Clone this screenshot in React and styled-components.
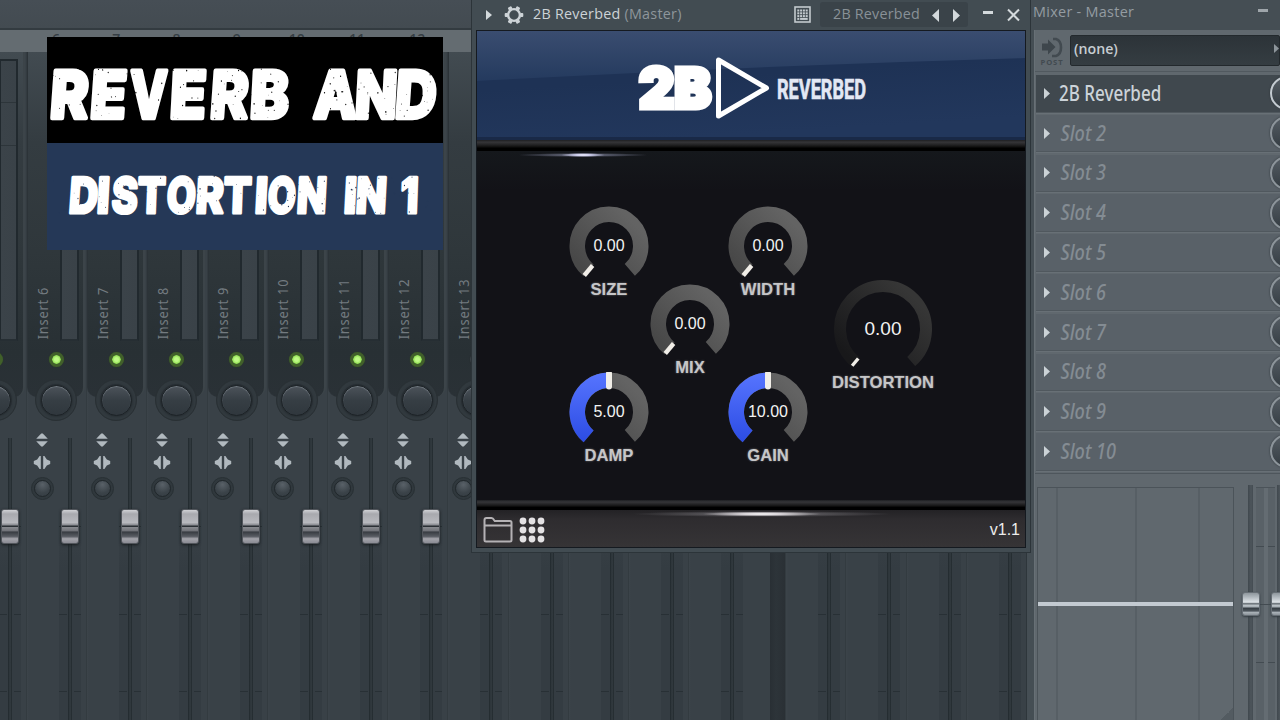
import React from 'react';
import styled, { createGlobalStyle } from 'styled-components';

const GlobalStyle = createGlobalStyle`
  * { box-sizing: border-box; }
  body { margin: 0; background: #394147; overflow: hidden; }
`;

const uiFont = `'Open Sans', 'Noto Sans', sans-serif`;
const narrowFont = `'Noto Sans', 'Open Sans', sans-serif`;

const Desktop = styled.div`
  position: relative;
  display: flex;
  width: 1280px;
  height: 720px;
  overflow: hidden;
  font-family: ${uiFont};
  background: #394147;
`;

/* ---------- mixer strips ---------- */

const Mixer = styled.div`
  display: flex;
  flex-direction: column;
  width: 1026px;
  flex: none;
  overflow: hidden;
`;

const TopBar = styled.div`
  height: 30px;
  flex: none;
  background: linear-gradient(#464e55, #434b51);
  border-bottom: 2px solid #333b40;
`;

const Ruler = styled.div`
  display: flex;
  height: 22px;
  flex: none;
  padding-left: 26px;
  background: #646c71;
`;

const RulerMark = styled.div`
  width: 60.2px;
  flex: none;
  text-align: center;
  font-size: 14px;
  line-height: 17px;
  font-weight: 600;
  color: #353d43;
`;

const Strips = styled.div`
  display: flex;
  flex: 1;
  margin-left: -34.2px;
`;

const StripBox = styled.div`
  display: flex;
  flex-direction: column;
  align-items: center;
  width: 60.2px;
  height: 668px;
  flex: none;
  background: linear-gradient(90deg, #333b40 0, #333b40 1px, #3c444a 1px, #394147 3px, #394147 100%);
`;

const Upper = styled.div`
  display: flex;
  flex-direction: column;
  align-items: center;
  width: 58px;
  height: 345px;
  flex: none;
  padding-top: 7px;
  border-radius: 0 0 10px 10px;
  border-left: 1px solid #2c3338;
  border-right: 2px solid #3c4449;
  background: linear-gradient(#424b51 0, #343c41 90px, #2f373b 200px, #283034 300px, #2a3136);
`;

const NameAndMeter = styled.div`
  display: flex;
  align-items: flex-end;
  width: 58px;
  height: 282px;
  padding-left: 7px;
`;

const StripName = styled.div`
  width: 18px;
  height: 60px;
  margin-right: 8px;
  writing-mode: vertical-rl;
  transform: rotate(180deg) scaleY(0.91);
  transform-origin: 50% 50%;
  font-family: ${narrowFont};
  font-size: 14px;
  line-height: 18px;
  letter-spacing: 0.9px;
  white-space: nowrap;
  color: #737b80;
  position: relative;
  top: 1px;
`;

const Meter = styled.div`
  width: 19px;
  height: 282px;
  border: 2px solid #21292e;
  border-bottom-color: #262e33;
  background:
    linear-gradient(#2d353a, #2d353a) 0 41px / 100% 1px no-repeat,
    linear-gradient(#2d353a, #2d353a) 0 84px / 100% 1px no-repeat,
    linear-gradient(90deg, #3b4349, #3a4248);
`;

const Led = styled.div`
  width: 15px;
  height: 15px;
  margin-top: 11px;
  margin-left: 1px;
  border-radius: 50%;
  border: 3px solid ${(p) => (p.$off ? '#394147' : '#41602a')};
  background: ${(p) => (p.$off ? '#565e63' : 'radial-gradient(#bdf884 0 30%, #8bdb4c 70%)')};
  background-clip: padding-box;
  box-shadow: 0 0 1px ${(p) => (p.$off ? '#222' : '#33501f')};
`;

const PanSocket = styled.div`
  display: grid;
  place-items: center;
  width: 42px;
  height: 42px;
  flex: none;
  margin-top: -18px;
  border-radius: 50%;
  background: #2c3338;
  border: 1px solid #293034;
  box-shadow: inset 0 0 0 4px #31393e;
`;

const PanKnob = styled.div`
  width: 31px;
  height: 31px;
  border-radius: 50%;
  border: 1px solid #1d2327;
  background: linear-gradient(#4c535a, #363e44 50%, #30373d);
  box-shadow: inset 0 1px 1px #737b82, 0 0 2px #1b2024;
`;

const Lower = styled.div`
  display: flex;
  flex: 1;
  width: 100%;
`;

const Buttons = styled.div`
  display: flex;
  flex-direction: column;
  align-items: center;
  width: 32px;
  margin-right: 1px;
  padding-top: 12px;
  gap: 8px;
`;

const SmallKnobSocket = styled.div`
  display: grid;
  place-items: center;
  width: 23px;
  height: 23px;
  margin-top: -1px;
  border-radius: 50%;
  border: 1px solid #283034;
  background: #30383d;
`;

const SmallKnob = styled.div`
  width: 17px;
  height: 17px;
  border-radius: 50%;
  border: 1px solid #20272b;
  background: radial-gradient(circle at 50% 25%, #596168, #3b4349 60%, #343c42);
`;

const TrackArea = styled.div`
  display: flex;
  flex-direction: column;
  align-items: center;
  width: 22px;
  margin-top: 17px;
  background:
    linear-gradient(#283035, #283035) 0 176px / 8px 1px no-repeat,
    linear-gradient(#283035, #283035) 15px 176px / 7px 1px no-repeat,
    linear-gradient(#283035, #283035) 0 253px / 8px 1px no-repeat,
    linear-gradient(#283035, #283035) 15px 253px / 7px 1px no-repeat,
    linear-gradient(90deg, #20282c, #2f373c 40%, #30383d 65%, #20282c) 9px 0 / 4px 100% no-repeat,
    linear-gradient(#283035, #283035) 0 88px / 100% 1px no-repeat,
    linear-gradient(#394147 80px, #343c42 130px);
`;

const Handle = styled.div`
  width: ${(p) => p.$w || 18}px;
  height: ${(p) => p.$h || 35}px;
  flex: none;
  border-radius: 3px;
  border: 1px solid #52565c;
  background: linear-gradient(
    #d0d1d5 0,
    #a8a9ae 12%,
    #b8b9be 38%,
    #85878d 46%,
    #2b3035 48%,
    #2b3035 51%,
    #85878c 53%,
    #74767c 62%,
    #393d43 67%,
    #595c63 80%,
    #a3a3aa 87%,
    #8b8c94
  );
  box-shadow: 0 1px 3px #181d20;
`;

const StripHandle = styled(Handle)`
  margin-top: 71px;
`;

const SideHandle = styled(Handle)`
  border-color: #666e75;
  background: linear-gradient(
    #8f979d 0,
    #a9b1b7 15%,
    #dfe4e8 42%,
    #8f969c 46%,
    #4c545a 50%,
    #c0c7cc 54%,
    #a3abb1 64%,
    #343b41 68%,
    #50585f 82%,
    #a9b1b7 88%,
    #8b9299
  );
  box-shadow: 0 1px 2px #343c42;
`;

const Divider = styled.div`
  width: 37px;
  flex: none;
  background: linear-gradient(90deg, #394147 22px, #292f34 22px, #2d3439 28px, #2a3035 37px);
`;

const ArrowsUpDown = () => (
  <svg width="14" height="14" viewBox="0 0 14 14" fill="#b1b9bf">
    <path d="M6.200 .5h1.600L12.800 5.800H1.200z" />
    <path d="M1.200 8.200h11.600L7.800 13.500H6.200z" />
  </svg>
);

const ArrowsLeftRight = () => (
  <svg width="18" height="15" viewBox="0 0 18 15" fill="#b1b9bf">
    <path d="M7.800 1v13H6.600L4.200 10.500 .8 9V6l3.400-1.500L6.600 1z" />
    <path d="M10.200 1v13h1.200l2.400-3.500L17.200 9V6l-3.400-1.500L11.400 1z" />
  </svg>
);

const Strip = ({ name, off }) => (
  <StripBox>
    <Upper>
      <NameAndMeter>
        <StripName>{name}</StripName>
        <Meter />
      </NameAndMeter>
      <Led $off={off} />
    </Upper>
    <PanSocket>
      <PanKnob />
    </PanSocket>
    <Lower>
      <Buttons>
        <ArrowsUpDown />
        <ArrowsLeftRight />
        <SmallKnobSocket>
          <SmallKnob />
        </SmallKnobSocket>
      </Buttons>
      <TrackArea>
        <StripHandle />
      </TrackArea>
    </Lower>
  </StripBox>
);

/* ---------- banner ---------- */

const Banner = styled.div`
  position: absolute;
  left: 47px;
  top: 37px;
  width: 396px;
  height: 213px;
  background: #253857;
`;

const BannerLine = styled.svg`
  display: block;
  width: 396px;
  height: 106px;
  overflow: visible;
  background: ${(p) => p.$bg};
  fill: #fff;
  stroke: #fff;
  stroke-linejoin: round;
  font-family: Inter, 'Open Sans', sans-serif;
  font-weight: 800;
`;

const makeSpecks = (count, seed, top, height) => {
  let s = seed;
  const next = () => {
    s = (s * 16807) % 2147483647;
    return s / 2147483647;
  };
  return Array.from({ length: count }, () => ({
    x: next() * 380 + 6,
    y: top + next() * height,
    r: 0.25 + next() * 0.4,
  }));
};

const Specks = ({ items, color }) =>
  items.map((d, i) => (
    <ellipse key={i} cx={d.x} cy={d.y} rx={d.r} ry={d.r * 1.3} fill={color} stroke="none" />
  ));

const bigSpecks = makeSpecks(150, 77, 32, 50);
const smallSpecks = makeSpecks(110, 191, 33, 38);

/* each letter sits on its own slant, like brush lettering */
const Lettering = ({ letters, size, y, stroke }) =>
  letters.map(([ch, x, w, skew], i) => (
    <text
      key={i}
      transform={`translate(${x} ${y}) skewX(${skew})`}
      fontSize={size}
      strokeWidth={stroke}
      textLength={w}
      lengthAdjust="spacingAndGlyphs"
    >
      {ch}
    </text>
  ));

const topLetters = [
  ['R', 2, 38, -4],
  ['E', 42, 36, -4],
  ['V', 83, 37, -1],
  ['E', 122, 36, -3],
  ['R', 162, 38, -4],
  ['B', 202, 39, -3],
  ['A', 266, 43, -3],
  ['N', 307, 42, -3],
  ['D', 347, 41, -4],
];

const bottomLetters = [
  ['D', 21, 29, -4],
  ['I', 49, 13, -3],
  ['S', 64, 26, -3],
  ['T', 90, 28, -2],
  ['O', 119, 29, -3],
  ['R', 148, 28, -3],
  ['T', 176, 28, -2],
  ['I', 207, 13, -3],
  ['O', 220, 28, -3],
  ['N', 249, 30, -3],
  ['I', 296, 13, -3],
  ['N', 308, 31, -3],
  ['1', 353, 18, -2],
];

/* ---------- plugin window ---------- */

const Window = styled.div`
  position: absolute;
  left: 471px;
  top: 0;
  width: 560px;
  height: 553px;
  padding: 0 4px 5px;
  background: #424c52;
  border: 1px solid #2c3439;
  border-top: 0;
`;

const TitleBar = styled.div`
  display: flex;
  align-items: center;
  height: 30px;
  padding: 0 0 1px 10px;
  color: #cdd3d7;
  font-size: 14.3px;
`;

const TitleText = styled.div`
  width: 261px;
  margin-left: 9px;
  white-space: nowrap;
  line-height: 26px;
  letter-spacing: 0.27px;
  padding-bottom: 2px;
`;

const Dim = styled.span`
  color: #8e969b;
`;

const PresetBox = styled.div`
  display: flex;
  align-items: center;
  width: 148px;
  height: 25px;
  margin-left: 9px;
  padding-left: 13px;
  border-radius: 3px;
  background: #3a4349;
  color: #899197;
  line-height: 22px;
  letter-spacing: 0.22px;
  white-space: nowrap;
`;

const PresetName = styled.div`
  width: 99px;
  padding-bottom: 2px;
`;

const Screen = styled.div`
  display: flex;
  flex-direction: column;
  width: 550px;
  height: 518px;
  border: 1px solid #151a20;
  background: #121217;
`;

const Header = styled.div`
  height: 109px;
  flex: none;
`;

const HeaderArt = styled.svg`
  display: block;
`;

const Ridge = styled.div`
  height: ${(p) => p.$h}px;
  flex: none;
  background: linear-gradient(#1e1f22, #353538 20%, #252527 40%, #181818 55%, #000 75%, #000);
`;

const Body = styled.div`
  flex: 1;
  background:
    radial-gradient(ellipse 22px 2px at 106px 4px, #fff, #cfd0ef 35%, transparent),
    radial-gradient(ellipse 66px 2px at 106px 4px, #80849c, transparent),
    linear-gradient(#15181c, #121217 40px);
`;

const Knobs = styled.div`
  display: grid;
  grid-template-columns: 80px 82px 74px 156px;
  padding: 54.5px 0 0 92px;
`;

const KnobColumn = styled.div`
  display: flex;
  flex-direction: column;
  align-items: center;
  gap: 72px;
  padding-top: ${(p) => p.$drop || 0}px;
`;

const KnobBox = styled.div`
  display: flex;
  flex-direction: column;
  align-items: center;
  width: ${(p) => p.$size}px;
`;

const Dial = styled.div`
  display: grid;
  place-items: center;
  width: ${(p) => p.$size}px;
  height: ${(p) => p.$size}px;

  > * {
    grid-area: 1 / 1;
  }
`;

const DialValue = styled.span`
  font-family: 'Liberation Sans', Arial, sans-serif;
  font-size: ${(p) => p.$font}px;
  color: #f2f2f2;
`;

const KnobLabel = styled.div`
  margin-top: -6px;
  font-family: 'Liberation Sans', Arial, sans-serif;
  font-weight: 700;
  font-size: 16.6px;
  line-height: 20px;
  color: #c6c6c8;
  white-space: nowrap;
  text-shadow: 0 0 2px #77777a;
`;

const polar = (c, r, deg) => {
  const a = ((deg - 90) * Math.PI) / 180;
  return `${c + r * Math.cos(a)} ${c + r * Math.sin(a)}`;
};

const arc = (c, r, from, to) =>
  `M${polar(c, r, from)} A${r} ${r} 0 ${to - from > 180 ? 1 : 0} 1 ${polar(c, r, to)}`;

const Knob = ({ label, value, angle = -140, big }) => {
  const size = big ? 100 : 80;
  const c = size / 2;
  const thick = big ? 12 : 15.5;
  const r = (big ? 49 : 39.5) - thick / 2;
  const id = `ring-${label}`;
  return (
    <KnobBox $size={size}>
      <Dial $size={size}>
        <svg width={size} height={size} fill="none" strokeWidth={thick}>
          <defs>
            <linearGradient id={id} gradientUnits="userSpaceOnUse" x1="8" y1={size * 0.7} x2={size * 0.7} y2="8">
              <stop offset="0" stopColor={big ? '#18181a' : '#484848'} />
              <stop offset="1" stopColor={big ? '#363636' : '#636363'} />
            </linearGradient>
            <linearGradient id={`${id}-blue`} gradientUnits="userSpaceOnUse" x1="0" y1="0" x2="0" y2={size}>
              <stop offset="0" stopColor="#5775ff" />
              <stop offset="1" stopColor="#2646df" />
            </linearGradient>
          </defs>
          <path d={arc(c, r, -140, 139)} stroke={`url(#${id})`} />
          {angle > -140 && <path d={arc(c, r, -140, angle)} stroke={`url(#${id}-blue)`} />}
          <path
            d={`M${polar(c, r - thick / 2 + 1.5, angle)} L${polar(c, r + thick / 2 - 1, angle)}`}
            stroke="#f1eee8"
            strokeWidth={angle === -140 ? (big ? 3.4 : 4.4) : 6}
            strokeLinecap={angle === -140 ? 'butt' : 'round'}
          />
        </svg>
        <DialValue $font={big ? 19 : 16}>{value}</DialValue>
      </Dial>
      <KnobLabel>{label}</KnobLabel>
    </KnobBox>
  );
};

const Footer = styled.div`
  display: flex;
  align-items: center;
  height: 37px;
  flex: none;
  padding: 2px 5px 0 6px;
  gap: 6px;
  background:
    radial-gradient(ellipse 60px 2.5px at 285px 4px, #fff, #d8d4d8 35%, transparent),
    radial-gradient(ellipse 130px 3px at 285px 4px, #77757a, transparent),
    linear-gradient(#232225, #2e2c2f 25%, #363436);
`;

const Version = styled.div`
  margin-left: auto;
  padding-top: 1px;
  font-family: 'Liberation Sans', Arial, sans-serif;
  font-size: 16px;
  color: #ececec;
`;

const Gear = styled.svg`
  margin-left: 12px;
`;

const GearIcon = () => (
  <Gear width="20" height="20" viewBox="-10 -10 20 20">
    <circle r="5.9" fill="none" stroke="#cdd3d7" strokeWidth="2.4" />
    {[0, 60, 120, 180, 240, 300].map((a) => (
      <rect key={a} x="6" y="-2" width="3.300" height="4" rx="1" fill="#cdd3d7" transform={`rotate(${a})`} />
    ))}
  </Gear>
);

const KeypadIcon = () => (
  <svg width="17" height="17" viewBox="0 0 17 17">
    <rect x="1" y="1" width="15" height="15" fill="none" stroke="#c3cace" strokeWidth="1.6" />
    <g fill="#c3cace">
      {[3.3, 6.1, 8.9, 11.7].map((x) => [3.5, 6.3, 9.1].map((y) => <rect key={`${x}-${y}`} x={x} y={y} width="2" height="2" />))}
      <rect x="3.3" y="11.9" width="2" height="2" />
      <rect x="6.1" y="11.9" width="7.6" height="2" />
    </g>
  </svg>
);

const Triangle = ({ w = 6, h = 12, left, color = '#d3d9dc' }) => (
  <svg width={w} height={h} viewBox="0 0 6 12" preserveAspectRatio="none" fill={color}>
    <path d={left ? 'M6 0v12L0 6z' : 'M0 0v12l6-6z'} />
  </svg>
);

const PresetArrows = styled.div`
  display: flex;
  gap: 14px;
  padding-top: 2px;
`;

const WindowButtons = styled.svg`
  margin-left: 13px;
`;

/* ---------- right panel ---------- */

const SidePanel = styled.div`
  display: flex;
  flex-direction: column;
  width: 254px;
  flex: none;
  padding-left: 7px;
  background: #454e54;
  border-left: 1px solid #2e363b;
`;

const SideTitle = styled.div`
  display: flex;
  justify-content: space-between;
  height: 30px;
  flex: none;
  margin-left: -1px;
  padding: 2px 12px 0 0;
  color: #949ca2;
  font-size: 14.4px;
  line-height: 19px;
  letter-spacing: 0.3px;
`;

const Minus = styled.div`
  width: 10px;
  height: 3px;
  margin-top: 7px;
  background: #9fa6ab;
`;

const SideBody = styled.div`
  display: flex;
  flex-direction: column;
  flex: 1;
  overflow: hidden;
  background: #60686e;
  border-left: 1px solid #687076;
`;

const RouteRow = styled.div`
  display: flex;
  height: 42px;
  flex: none;
  padding: 5px 0 0 5px;
  border-bottom: 1px solid #51595f;
`;

const PostBox = styled.div`
  display: flex;
  flex-direction: column;
  align-items: center;
  width: 24px;
  margin-right: 6px;
  padding-top: 2px;
  font-size: 7.6px;
  line-height: 8px;
  font-weight: 700;
  letter-spacing: 0.9px;
  color: #424a50;
`;

const RouteSelect = styled.div`
  display: flex;
  align-items: center;
  justify-content: space-between;
  width: 210px;
  height: 31px;
  padding: 0 0 4px 3px;
  border: 1px solid #23292d;
  border-radius: 2px;
  background: linear-gradient(#2c3338, #353d42);
  color: #c6cdd2;
  font-size: 14.2px;
  font-weight: 600;
`;

const SlotList = styled.div`
  display: flex;
  flex-direction: column;
  gap: 2.3px;
  padding: 3px 0 0 1px;
`;

const SlotRow = styled.div`
  display: flex;
  align-items: center;
  height: 37.5px;
  flex: none;
  padding-left: 8px;
  background: ${(p) => (p.$active ? '#40484e' : '#596168')};
  border-bottom: 1px solid #50585e;
  box-shadow: 0 1px 0 #687076;
`;

const SlotArrow = styled.div`
  display: flex;
  width: 6px;
  flex: none;
`;

const SlotName = styled.div`
  width: 210px;
  flex: none;
  margin-left: ${(p) => (p.$active ? 9 : 10)}px;
  margin-right: ${(p) => (p.$active ? 1 : 0)}px;
  padding-bottom: 1px;
  font-family: ${narrowFont};
  font-size: 21px;
  line-height: 34px;
  font-weight: 500;
  font-style: ${(p) => (p.$active ? 'normal' : 'italic')};
  color: ${(p) => (p.$active ? '#ccd3d9' : '#848c93')};
  transform: translateX(${(p) => (p.$active ? 0 : 0.5)}px) scaleX(${(p) => (p.$active ? 0.81 : 0.86)});
  transform-origin: 0 50%;
  white-space: nowrap;
`;

const SlotKnob = styled.div`
  width: 34px;
  height: 34px;
  flex: none;
  border-radius: 50%;
  border: 2px solid ${(p) => (p.$active ? '#c3cad0' : '#8c949a')};
  background: linear-gradient(#555d64, #343c42);
  box-shadow: 0 0 2px #2b3237;
`;

const EqArea = styled.div`
  display: flex;
  flex: 1;
  margin-top: 2px;
  padding: 13px 0 0 2px;
  border-top: 1px solid #4e565c;
`;

const EqBox = styled.div`
  display: flex;
  align-items: flex-start;
  width: 197px;
  height: 260px;
  flex: none;
  padding-top: 114px;
  border: 1px solid #4b5359;
  background:
    linear-gradient(#575f65, #575f65) 18px 0 / 2px 100% no-repeat,
    linear-gradient(#575f65, #575f65) 97px 0 / 2px 100% no-repeat,
    linear-gradient(#575f65, #575f65) 160px 0 / 2px 100% no-repeat,
    linear-gradient(135deg, transparent 50%, #535b61 50%) 182px 220px / 13px 13px no-repeat;
`;

const EqLine = styled.div`
  width: 196px;
  height: 4px;
  background: #c3cad1;
`;

const SideTrack = styled.div`
  position: relative;
  z-index: 1;
  display: flex;
  justify-content: center;
  width: 18px;
  height: 260px;
  flex: none;
  margin-left: ${(p) => p.$gap}px;
  margin-top: -2px;
  padding-top: 107px;
  background: linear-gradient(90deg, #40484e, #4d555b 60%, #444c52) 6px 0 / 5px 100% no-repeat;
`;

const SideScale = styled.div`
  width: 19px;
  height: 260px;
  flex: none;
  margin-left: -4px;
  margin-right: -4px;
  border-top: 1px solid #4b5359;
  background:
    linear-gradient(#434b51, #434b51) 0 58px / 8px 1px no-repeat,
    linear-gradient(#434b51, #434b51) 12px 58px / 7px 1px no-repeat,
    linear-gradient(#434b51, #434b51) 0 116px / 100% 1px no-repeat,
    linear-gradient(#434b51, #434b51) 0 174px / 8px 1px no-repeat,
    linear-gradient(#434b51, #434b51) 12px 174px / 7px 1px no-repeat,
    linear-gradient(90deg, #596167 8px, #646c72 8px 12px, #596167 12px);
`;

const PostIcon = () => (
  <svg width="22" height="21" viewBox="0 0 22 21">
    <path d="M1 6.500h6V2.500l7.500 7.500-7.500 7.500v-4H1z" fill="#3e464c" />
    <path d="M12 2h3q5 1.500 5 8.500t-5 8.500h-4" fill="none" stroke="#424a50" strokeWidth="2.600" />
  </svg>
);

const slots = ['2B Reverbed', 'Slot 2', 'Slot 3', 'Slot 4', 'Slot 5', 'Slot 6', 'Slot 7', 'Slot 8', 'Slot 9', 'Slot 10'];
const inserts = [5, 6, 7, 8, 9, 10, 11, 12, 13, 14, 15, 16, 17];
const docked = [100, 101, 102, 103];

const App = () => (
  <>
    <GlobalStyle />
    <Desktop>
      <Mixer>
        <TopBar />
        <Ruler>
          {[6, 7, 8, 9, 10, 11, 12].map((n) => (
            <RulerMark key={n}>{n}</RulerMark>
          ))}
        </Ruler>
        <Strips>
          {inserts.map((n) => (
            <Strip key={n} name={n > 5 && n < 14 ? `Insert ${n}` : ''} off={n > 12} />
          ))}
          <Divider />
          {docked.map((n) => (
            <Strip key={n} name="" off />
          ))}
        </Strips>
      </Mixer>

      <SidePanel>
        <SideTitle>
          <span>Mixer - Master</span>
          <Minus />
        </SideTitle>
        <SideBody>
          <RouteRow>
            <PostBox>
              <PostIcon />
              POST
            </PostBox>
            <RouteSelect>
              (none)
              <Triangle w={5} h={9} color="#8d959b" />
            </RouteSelect>
          </RouteRow>
          <SlotList>
            {slots.map((name, i) => (
              <SlotRow key={name} $active={i === 0}>
                <SlotArrow>
                  <Triangle h={11} color="#cbd2d6" />
                </SlotArrow>
                <SlotName $active={i === 0}>{name}</SlotName>
                <SlotKnob $active={i === 0} />
              </SlotRow>
            ))}
          </SlotList>
          <EqArea>
            <EqBox>
              <EqLine />
            </EqBox>
            <SideTrack $gap={8}>
              <SideHandle $w={18} $h={24} />
            </SideTrack>
            <SideScale />
            <SideTrack $gap={0}>
              <SideHandle $w={18} $h={24} />
            </SideTrack>
          </EqArea>
        </SideBody>
      </SidePanel>

      <Window>
        <TitleBar>
          <Triangle w={6} h={10} />
          <GearIcon />
          <TitleText>
            2B Reverbed <Dim>(Master)</Dim>
          </TitleText>
          <KeypadIcon />
          <PresetBox>
            <PresetName>2B Reverbed</PresetName>
            <PresetArrows>
              <Triangle h={13} w={7} left />
              <Triangle h={13} w={7} />
            </PresetArrows>
          </PresetBox>
          <WindowButtons width="40" height="20" viewBox="0 0 40 20">
            <rect x="2" y="6" width="10" height="3" fill="#d3d9dc" />
            <path d="M27 4.500l11 11M38 4.500l-11 11" stroke="#d3d9dc" strokeWidth="2" />
          </WindowButtons>
        </TitleBar>
        <Screen>
          <Header>
            <HeaderArt width="548" height="109" viewBox="0 0 548 109">
              <defs>
                <linearGradient id="gloss" x1="0" y1="0" x2="0" y2="1">
                  <stop offset="0" stopColor="#3a4d70" />
                  <stop offset="1" stopColor="#243a5e" />
                </linearGradient>
                <linearGradient id="deep" x1="0" y1="0" x2="0.300" y2="1">
                  <stop offset="0.500" stopColor="#1e3255" />
                  <stop offset="1" stopColor="#22375c" />
                </linearGradient>
              </defs>
              <rect width="548" height="109" fill="url(#deep)" />
              <path d="M0 0h548v27Q300 34 0 50z" fill="url(#gloss)" />
              <rect y="106" width="548" height="3" fill="#192947" />
              <g fill="#fff">
                <text
                  x="162"
                  y="77"
                  fontFamily="Inter, sans-serif"
                  fontWeight="900"
                  fontSize="55"
                  stroke="#fff"
                  strokeWidth="5"
                  textLength="72"
                  lengthAdjust="spacingAndGlyphs"
                >
                  2B
                </text>
                <path d="M241.500 29v56l48-28z" fill="none" stroke="#fff" strokeWidth="5" strokeLinejoin="round" />
                <text
                  x="300"
                  y="67.500"
                  fill="#e3e8f4"
                  stroke="#e3e8f4"
                  strokeWidth="0.700"
                  fontFamily="Roboto, sans-serif"
                  fontWeight="700"
                  fontSize="28.500"
                  textLength="89"
                  lengthAdjust="spacingAndGlyphs"
                >
                  REVERBED
                </text>
              </g>
            </HeaderArt>
          </Header>
          <Ridge $h={11} />
          <Body>
            <Knobs>
              <KnobColumn>
                <Knob label="SIZE" value="0.00" />
                <Knob label="DAMP" value="5.00" angle={0} />
              </KnobColumn>
              <KnobColumn $drop={78}>
                <Knob label="MIX" value="0.00" />
              </KnobColumn>
              <KnobColumn>
                <Knob label="WIDTH" value="0.00" />
                <Knob label="GAIN" value="10.00" angle={0} />
              </KnobColumn>
              <KnobColumn $drop={73}>
                <Knob label="DISTORTION" value="0.00" big />
              </KnobColumn>
            </Knobs>
          </Body>
          <Ridge $h={10} />
          <Footer>
            <svg width="30" height="26" viewBox="0 0 30 26" fill="none" stroke="#b5b2b5" strokeWidth="2">
              <path d="M1.500 23V3q0-2 2-2h5q1.500 0 2.500 2l.8 1H27q1.500 0 1.500 1.500V23q0 1.500-1.500 1.500H3q-1.500 0-1.500-1.500zM1.500 8.500h27" />
            </svg>
            <svg width="26" height="26" viewBox="0 0 26 26" fill="#e4e2e4">
              {[4, 13, 22].map((x) => [4, 13, 22].map((y) => <circle key={`${x}-${y}`} cx={x} cy={y} r="3.400" />))}
            </svg>
            <Version>v1.1</Version>
          </Footer>
        </Screen>
      </Window>

      <Banner>
        <BannerLine $bg="#000" viewBox="0 0 396 106">
          <Lettering letters={topLetters} size={65} y={81} stroke={4.6} />
          <Specks items={bigSpecks} color="#000" />
        </BannerLine>
        <BannerLine $bg="#253857" viewBox="0 0 396 106">
          <Lettering letters={bottomLetters} size={49} y={69.500} stroke={3.2} />
          <Specks items={smallSpecks} color="#253857" />
        </BannerLine>
      </Banner>
    </Desktop>
  </>
);

export default App;
